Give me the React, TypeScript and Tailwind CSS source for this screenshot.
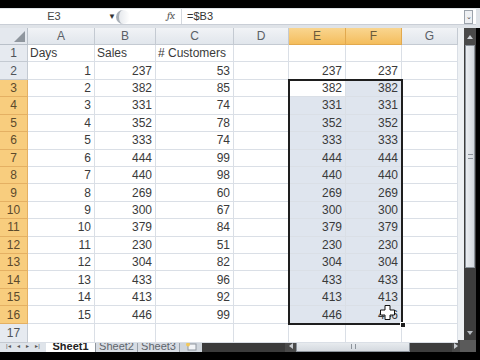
import React from "react";

const sales = [237, 382, 331, 352, 333, 444, 440, 269, 300, 379, 230, 304, 433, 413, 446];
const customers = [53, 85, 74, 78, 74, 99, 98, 60, 67, 84, 51, 82, 96, 92, 99];
const columns = ["A", "B", "C", "D", "E", "F", "G"];

function FormulaBar() {
  return (
    <div className="h-[20px] bg-[#dfe3e8] pt-px pr-[4px]">
      <div className="h-[16px] bg-white flex items-center border-b border-[#c9ced6]">
        {/* Name box */}
        <div className="w-[108px] text-center text-[11px] text-[#444]">E3</div>
        <div className="w-[8px] text-[8px] text-[#333] leading-none">▼</div>
        <div className="w-[14px] h-[14px] rounded-full border-l-[3px] border-[#a9b0b8] bg-gradient-to-r from-[#e6e9ed] to-white" />
        <div className="w-[37px]" />
        <div className="w-[14px] text-[11px] italic font-serif text-[#555]">fx</div>
        <div className="w-px h-full bg-[#d4d8de] mr-[5px]" />
        <div className="flex-1 text-[11px] text-[#333]">=$B3</div>
        {/* expand */}
        <div className="w-[9px] h-[14px] border border-[#9ca3ab] bg-[#eef0f3] flex items-center justify-center text-[7px] leading-none text-[#444] mr-[3px]">
          ⌄
        </div>
      </div>
    </div>
  );
}

function Grid() {
  const cellBase = "border-r border-b border-[#dadfe6] flex items-center text-[12px] text-[#3a3a3a]";
  const rows: React.ReactNode[] = [];

  // column header
  rows.push(
    <div key="corner" className="bg-[#e4e8ee] border-r border-b border-[#b9c0c9] relative">
      <svg className="absolute right-[2px] bottom-[2px]" width="11" height="11" viewBox="0 0 11 11">
        <path d="M11 0 L11 11 L0 11 Z" fill="#8f969e" />
      </svg>
    </div>
  );
  columns.forEach((c) => {
    const hi = c === "E" || c === "F";
    rows.push(
      <div
        key={"h" + c}
        className={
          "border-r border-b flex items-center justify-center text-[12px] " +
          (hi
            ? "bg-gradient-to-b from-[#f9d58f] to-[#f4bd5c] border-[#e2a94e] text-[#6b5a3a]"
            : "bg-gradient-to-b from-[#f1f3f6] to-[#e1e6ec] border-[#c4cad2] text-[#5a5f66]")
        }
      >
        {c}
      </div>
    );
  });

  for (let r = 1; r <= 17; r++) {
    const hi = r >= 3 && r <= 16;
    rows.push(
      <div
        key={"r" + r}
        className={
          "border-r border-b flex items-center justify-center text-[12px] " +
          (hi ? "bg-[#f8cd7e] border-[#e4b063] text-[#5c4a2c]" : "bg-[#e6eaf0] border-[#c4cad2] text-[#4f545a]")
        }
      >
        {r}
      </div>
    );
    const i = r - 2;
    const vals: (string | number | null)[] =
      r === 1
        ? ["Days", "Sales", "# Customers", null, null, null, null]
        : r <= 16
        ? [i + 1, sales[i], customers[i], null, sales[i], sales[i], null]
        : [null, null, null, null, null, null, null];
    vals.forEach((v, ci) => {
      const inSel = r >= 3 && r <= 16 && (ci === 4 || ci === 5) && !(r === 3 && ci === 4);
      const isText = typeof v === "string";
      rows.push(
        <div
          key={r + "-" + ci}
          className={
            cellBase +
            (isText ? " justify-start pl-[2px]" : " justify-end pr-[3px]") +
            (inSel ? " bg-[#dfe5ee]" : " bg-white")
          }
        >
          {v}
        </div>
      );
    });
  }

  return (
    <div className="relative w-[458px] h-full grid grid-cols-[28px_67px_61px_78px_55px_57px_56px_56px] grid-rows-[17px_repeat(16,17.43px)_1fr] bg-white">
      {rows}
      {/* selection border */}
      <div className="absolute left-[288px] top-[51px] w-[115px] h-[246px] border-2 border-[#1e1e1e] pointer-events-none" />
      {/* fill handle */}
      <div className="absolute left-[400px] top-[294px] w-[6px] h-[6px] bg-[#1e1e1e] border border-white" />
      {/* cursor */}
      <svg className="absolute left-[380px] top-[277px]" width="15" height="15" viewBox="0 0 15 15">
        <path d="M5 0.5 H10 V5 H14.5 V10 H10 V14.5 H5 V10 H0.5 V5 H5 Z" fill="white" stroke="#111" strokeWidth="1" />
      </svg>
    </div>
  );
}

function VScroll() {
  return (
    <div className="w-[12px] h-full flex flex-col bg-[#3d3d3d]">
      <div className="h-[17px] bg-[#4a4a4a] flex items-center justify-center">
        <svg width="6" height="4" viewBox="0 0 6 4">
          <path d="M0 4 L3 0 L6 4 Z" fill="#cfd3d8" />
        </svg>
      </div>
      <div className="h-[223px] mx-px bg-gradient-to-r from-[#e9ecf0] to-[#d3d8de] border border-[#8c939b] flex items-center justify-center">
        <div className="w-[5px] h-[5px] border-y border-[#8c939b]" />
      </div>
      <div className="flex-1" />
      <div className="h-[14px] flex items-center justify-center">
        <svg width="6" height="4" viewBox="0 0 6 4">
          <path d="M0 0 L3 4 L6 0 Z" fill="#b8bdc3" />
        </svg>
      </div>
    </div>
  );
}

function TabBar() {
  return (
    <div className="h-[12px] flex text-[11px] leading-none">
      <div className="w-[46px] bg-[#dfe4ea] flex items-center justify-around px-[3px] text-[6px] text-[#555]">
        <span>|◂</span>
        <span>◂</span>
        <span>▸</span>
        <span>▸|</span>
      </div>
      <div className="w-[50px] bg-white flex items-center justify-center font-bold text-[#222] border-r border-[#8e959d]">
        Sheet1
      </div>
      <div className="w-[42px] bg-[#d7dce3] flex items-center justify-center text-[#5f656c] border-r border-[#9aa1a9]">
        Sheet2
      </div>
      <div className="w-[42px] bg-[#d7dce3] flex items-center justify-center text-[#5f656c] border-r border-[#9aa1a9]">
        Sheet3
      </div>
      <div className="w-[22px] bg-[#cfd5dc] flex items-center justify-center">
        <svg width="12" height="9" viewBox="0 0 12 9">
          <rect x="3" y="2" width="8" height="6" fill="#f2f4f7" stroke="#8f969e" />
          <circle cx="3" cy="2.5" r="2" fill="#f3c85a" />
        </svg>
      </div>
      <div className="w-[83px] bg-[#3b3b3b]" />
      <div className="w-[11px] bg-[#4a4a4a] flex items-center justify-center">
        <svg width="4" height="6" viewBox="0 0 4 6">
          <path d="M4 0 L0 3 L4 6 Z" fill="#c8ccd1" />
        </svg>
      </div>
      <div className="w-[114px] bg-gradient-to-b from-[#eceff2] to-[#d4d9df] border border-[#8c939b] flex items-center justify-center">
        <div className="w-[5px] h-[5px] border-x border-[#8c939b]" />
      </div>
      <div className="w-[42px] bg-[#3d3d3d]" />
      <div className="w-[8px] bg-[#4a4a4a] flex items-center justify-center">
        <svg width="4" height="6" viewBox="0 0 4 6">
          <path d="M0 0 L4 3 L0 6 Z" fill="#c8ccd1" />
        </svg>
      </div>
      <div className="w-[16px] bg-[#5a5a5a]" />
    </div>
  );
}

export default function App() {
  return (
    <div
      className="w-[480px] h-[360px] bg-black flex flex-col overflow-hidden"
      style={{ fontFamily: '"Liberation Sans", Arial, sans-serif' }}
    >
      <div className="h-[8px]" />
      <FormulaBar />
      <div className="h-[312px] flex">
        <Grid />
        <div className="w-[6px] bg-[#eef1f4]" />
        <VScroll />
        <div className="w-[4px] bg-black" />
      </div>
      <TabBar />
    </div>
  );
}
